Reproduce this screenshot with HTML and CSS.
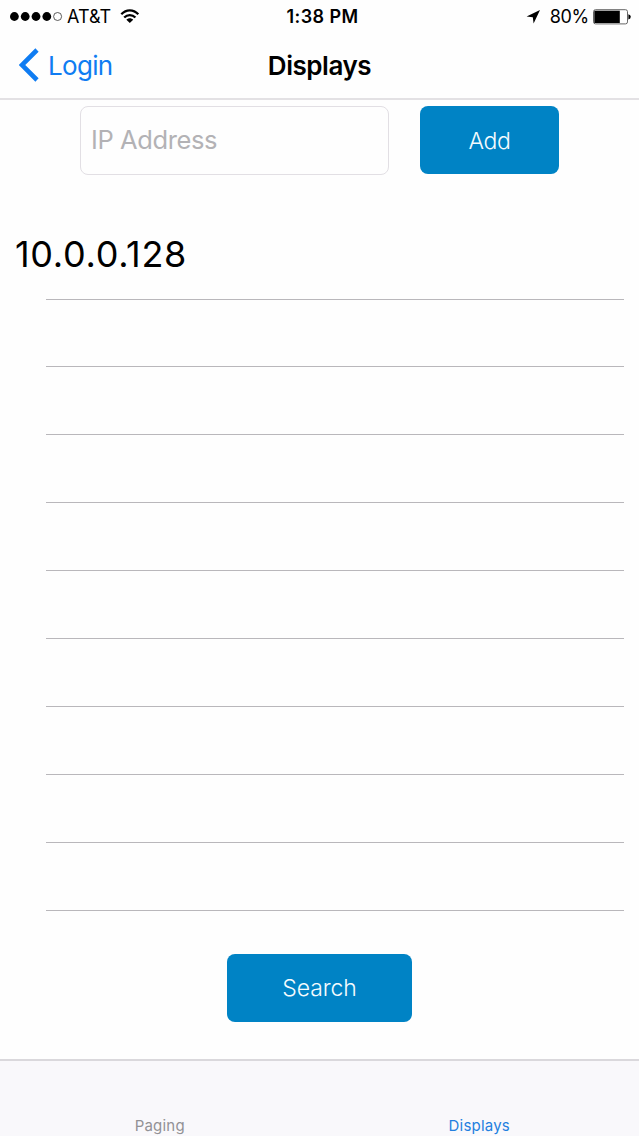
FILE: index.html
```html
<!DOCTYPE html>
<html lang="en">
<head>
    <meta charset="UTF-8">
    <meta name="viewport" content="width=device-width, initial-scale=1.0">
    <title>Displays</title>
    <link rel="stylesheet" href="styles.css">
</head>
<body>
    <div class="status-bar">
        <div class="carrier">
            <svg class="signal" width="53" height="10" viewBox="0 0 53 10">
                <circle cx="4.4" cy="4.5" r="4.4"/>
                <circle cx="15.2" cy="4.5" r="4.4"/>
                <circle cx="26" cy="4.5" r="4.4"/>
                <circle cx="36.8" cy="4.5" r="4.4"/>
                <circle cx="47.6" cy="4.5" r="4" fill="none" stroke="#333" stroke-width="0.8"/>
            </svg>
            <span class="carrier-name">AT&amp;T</span>
            <svg class="wifi" width="20" height="15" viewBox="0 0 20 15">
                <path d="M1.3 5.2C6.2 0 13.4 0 18.3 5.2M4.2 8.5C7.4 5.2 12.2 5.2 15.4 8.5" fill="none" stroke="#000" stroke-width="2.3"/>
                <path d="M9.8 14L6.4 10.8C8.2 8.8 11.4 8.8 13.2 10.8Z"/>
            </svg>
        </div>
        <span class="time">1:38 PM</span>
        <div class="power">
            <svg class="location" width="14" height="14" viewBox="0 0 14 14">
                <path d="M14 0L.6 6.6L6.8 7.3L7.6 13.4Z"/>
            </svg>
            <span class="percent">80%</span>
            <svg class="battery" width="38" height="16" viewBox="0 0 38 16">
                <rect x=".5" y=".7" width="34" height="14.2" rx="2" fill="#fff" stroke="#666"/>
                <path d="M1.3 1.7H26.8V14H1.3Z"/>
                <path d="M35.4 5.2Q37.8 5.8 37.8 7.8T35.4 10.4Z"/>
            </svg>
        </div>
    </div>

    <header class="nav-bar">
        <a class="back" href="#">
            <svg width="20" height="34" viewBox="0 0 20 34">
                <path d="M18 2L2.9 17L18 32" fill="none" stroke="#0f7cf2" stroke-width="4.6"/>
            </svg>
            <span>Login</span>
        </a>
        <h1>Displays</h1>
    </header>

    <main>
        <form class="add-form">
            <input class="ip-input" type="text" placeholder="IP Address">
            <button class="btn btn-add" type="button">Add</button>
        </form>

        <ul class="display-list">
            <li>10.0.0.128</li>
            <li></li>
            <li></li>
            <li></li>
            <li></li>
            <li></li>
            <li></li>
            <li></li>
            <li></li>
            <li></li>
        </ul>

        <button class="btn btn-search" type="button">Search</button>
    </main>

    <nav class="tab-bar">
        <a href="#">Paging</a>
        <a class="active" href="#">Displays</a>
    </nav>
</body>
</html>
```
FILE: styles.css
```css
* {
    box-sizing: border-box;
}
body {
    margin: 0;
    height: 1136px;
    display: flex;
    flex-direction: column;
    overflow: hidden;
    background: #fefefe;
    color: #000;
    font-family: Inter, "Liberation Sans", sans-serif;
}
a {
    color: inherit;
    text-decoration: none;
}
.status-bar {
    display: grid;
    grid-template-columns: 1fr auto 1fr;
    align-items: center;
    height: 32px;
    padding: 1px 8px 0 10px;
    font-size: 18px;
    line-height: 31px;
}
.carrier, .power {
    display: flex;
    align-items: center;
}
.carrier-name {
    margin-left: 4px;
}
.wifi {
    margin-left: 9px;
}
.time {
    padding-left: 4px;
    font-weight: 600;
    letter-spacing: 0.45px;
}
.power {
    justify-content: flex-end;
}
.percent {
    margin: 0 4px 0 10px;
    letter-spacing: -0.3px;
}
.nav-bar {
    display: grid;
    grid-template-columns: 1fr auto 1fr;
    align-items: center;
    height: 68px;
    padding: 0 19px;
    border-bottom: 2px solid #e3e1e4;
}
.nav-bar h1 {
    margin: 0;
    font-size: 26px;
    font-weight: 600;
    letter-spacing: -0.45px;
}
.back {
    display: flex;
    align-items: center;
    gap: 9px;
    color: #0f7cf2;
    font-size: 26px;
    letter-spacing: -0.7px;
}
main {
    flex: 1;
    display: flex;
    flex-direction: column;
}
.add-form {
    display: flex;
    gap: 31px;
    padding: 6px 80px 0;
}
.ip-input {
    width: 309px;
    height: 69px;
    padding: 0 10px 2px;
    border: 1px solid #e2dfe4;
    border-radius: 8px;
    background: #fefefe;
    font: 400 25.5px Inter, "Liberation Sans", sans-serif;
    letter-spacing: -0.4px;
}
.ip-input::placeholder {
    color: #b3b2b5;
}
.btn {
    height: 68px;
    padding: 0;
    border: 0;
    border-radius: 8px;
    background: #0083c5;
    color: #f4fbfe;
    font: 300 23px Inter, "Liberation Sans", sans-serif;
}
.btn-add {
    width: 139px;
    padding-top: 1px;
    letter-spacing: -0.3px;
}
.display-list {
    display: grid;
    grid-auto-rows: 67.93px;
    margin: 56.6px 15px 0 0;
    padding: 0;
    list-style: none;
}
.display-list li {
    margin-left: 46px;
    border-bottom: 1px solid #b9b7bb;
    font-size: 36px;
    letter-spacing: 0.7px;
    line-height: 45px;
    text-indent: -31px;
}
.btn-search {
    align-self: center;
    width: 185px;
    margin-top: 43.4px;
    letter-spacing: -0.1px;
}
.tab-bar {
    display: grid;
    grid-template-columns: 1fr 1fr;
    align-items: end;
    height: 77px;
    border-top: 2px solid #dad8dc;
    background: #f9f8fb;
    color: #929195;
    font-size: 15px;
    letter-spacing: 0.2px;
    line-height: 20px;
    text-align: center;
}
.tab-bar .active {
    color: #237fdf;
}
```
